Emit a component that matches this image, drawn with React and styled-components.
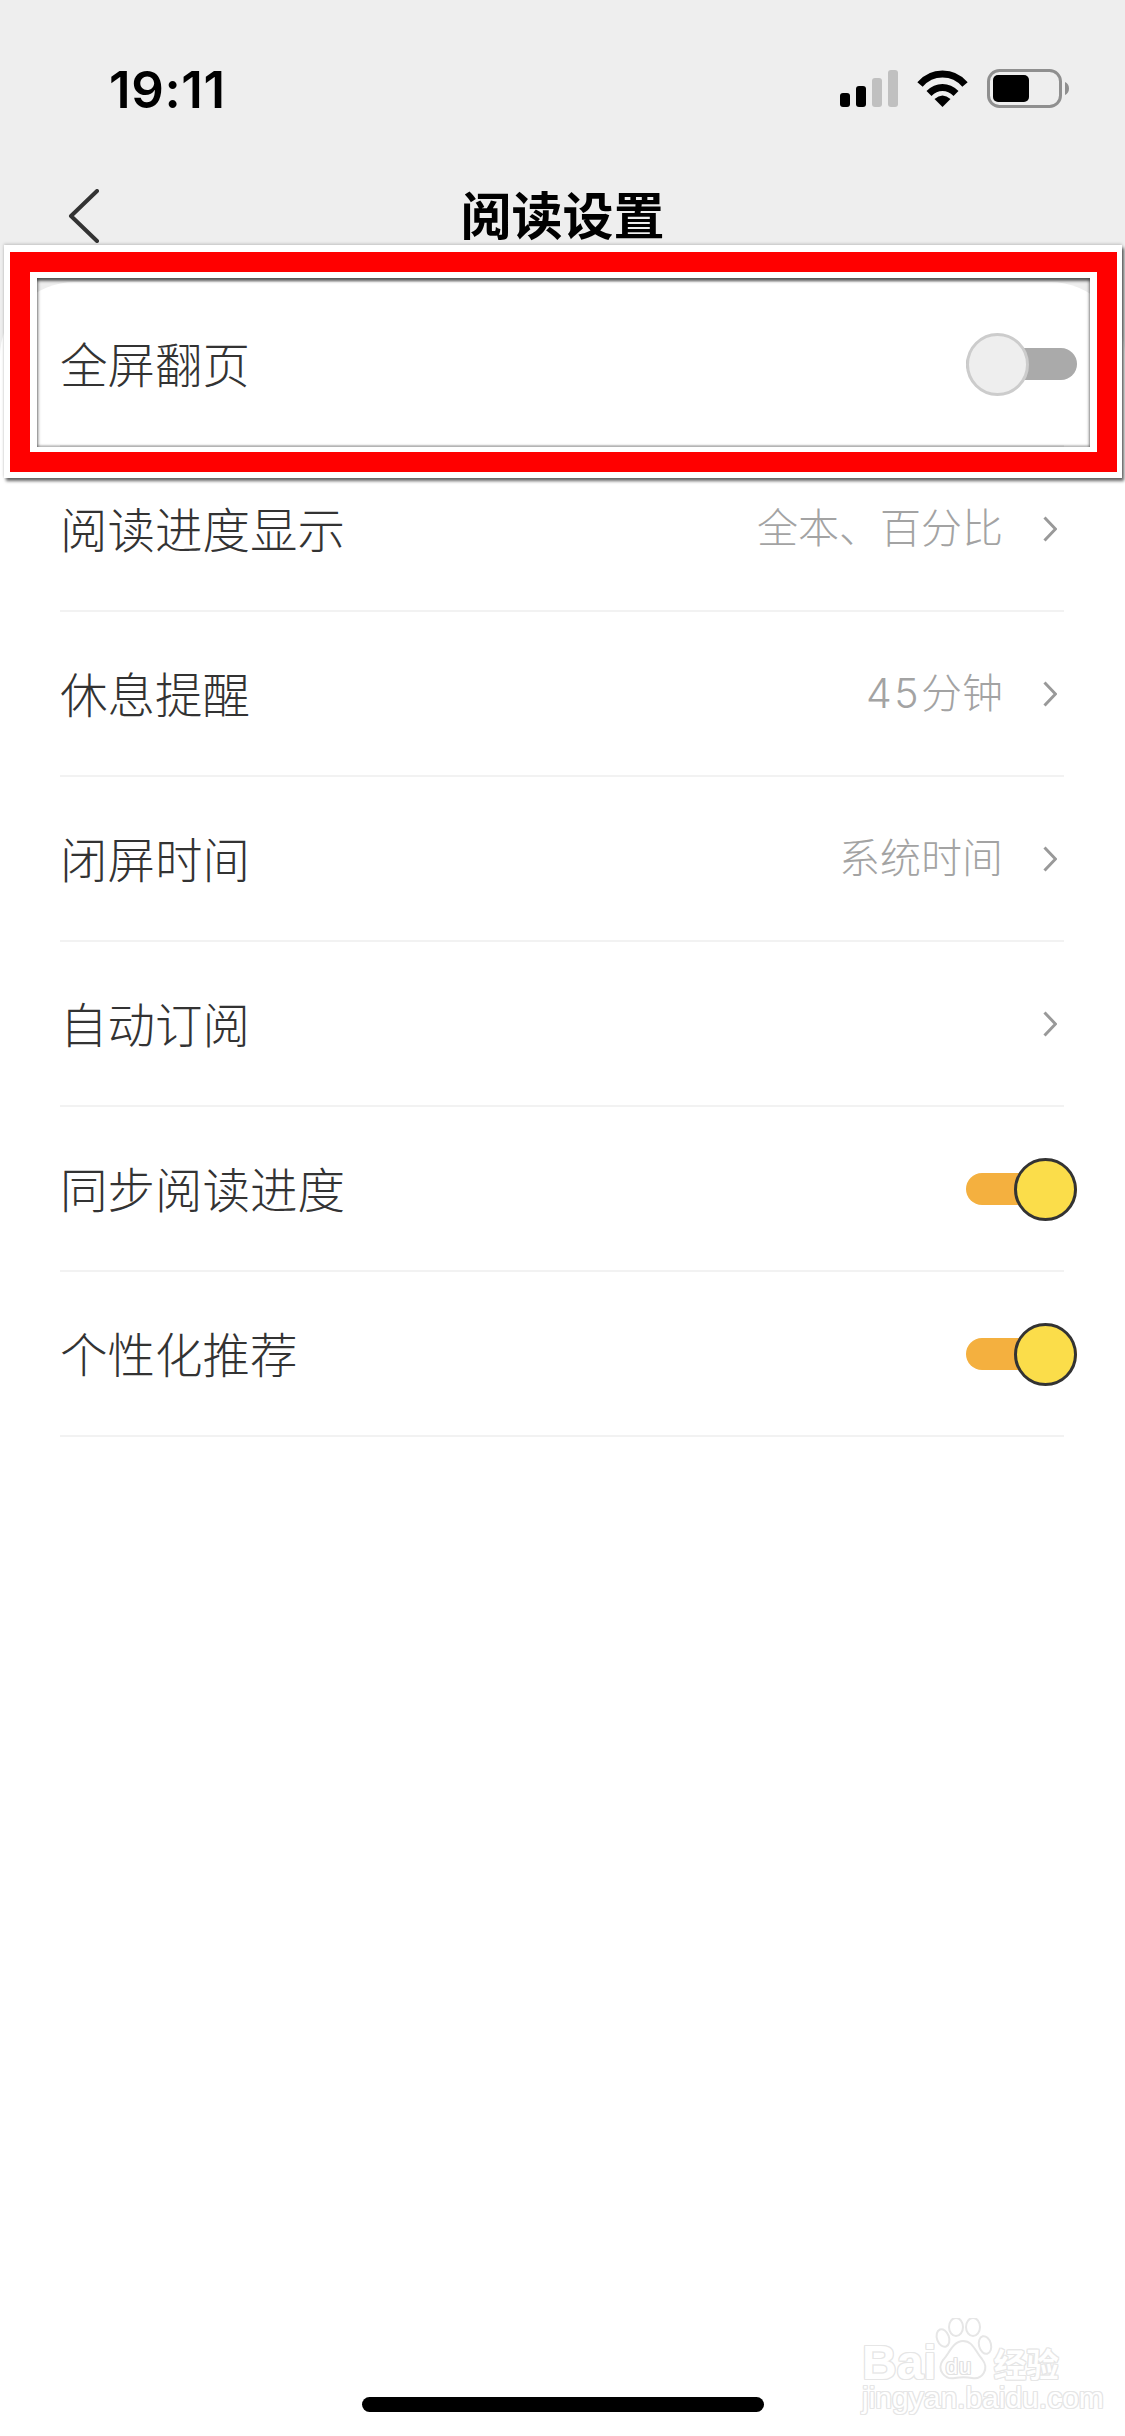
import React from "react";
import styled, { createGlobalStyle } from "styled-components";

const Global = createGlobalStyle`
  html, body { margin: 0; padding: 0; background: #fff; }
  * { box-sizing: border-box; }
`;

const CJK = `"Noto Sans CJK SC", "Noto Sans", sans-serif`;

const outline = (c) => `
  text-shadow:
    1px 0 0 ${c}, -1px 0 0 ${c}, 0 1px 0 ${c}, 0 -1px 0 ${c},
    1px 1px 0 ${c}, -1px 1px 0 ${c}, 1px -1px 0 ${c}, -1px -1px 0 ${c};
`;

const Page = styled.div`
  position: relative;
  width: 1125px;
  height: 2436px;
  overflow: hidden;
  display: flex;
  flex-direction: column;
  background: #eeeeee;
  font-family: ${CJK};
`;

const StatusBar = styled.div`
  height: 176px;
  flex: none;
  display: flex;
  align-items: center;
  justify-content: space-between;
  padding: 1px 56px 0 109px;
`;

const Time = styled.span`
  font-family: Inter, "Liberation Sans", sans-serif;
  font-size: 51px;
  font-weight: 600;
  line-height: 1;
  letter-spacing: 0.6px;
  padding-top: 2px;
  color: #000;
`;

const StatusIcons = styled.div`
  display: flex;
  align-items: center;
  gap: 19px;
`;

const NavBar = styled.div`
  height: 80px;
  flex: none;
  margin-bottom: 26px;
  display: grid;
  grid-template-columns: 1fr auto 1fr;
  align-items: center;
`;

const BackIcon = styled.svg`
  display: block;
  margin-left: 68px;
`;

const Title = styled.h1`
  margin: 0;
  padding-bottom: 6px;
  font-size: 51px;
  font-weight: 700;
  line-height: 1;
  color: #000;
`;

const Sheet = styled.main`
  flex: 1;
  display: flex;
  flex-direction: column;
  align-items: center;
  justify-content: space-between;
  padding-bottom: 24px;
  background: #fff;
  border-radius: 75px 75px 0 0;
`;

const List = styled.div`
  align-self: stretch;
  display: flex;
  flex-direction: column;
  padding: 0 61px 0 60px;
`;

const Row = styled.div`
  height: 165px;
  display: flex;
  align-items: center;
  justify-content: space-between;
  border-bottom: 2px solid #f2f2f2;
`;

const Label = styled.span`
  padding-bottom: 2px;
  font-size: 47.5px;
  font-weight: 300;
  line-height: 1;
  color: #333;
`;

const Detail = styled.div`
  display: flex;
  align-items: center;
  gap: 40px;
  padding-right: 7px;
`;

const Value = styled.span`
  font-family: Inter, ${CJK};
  font-size: 41px;
  font-weight: 300;
  line-height: 1;
  color: #a3a3a3;
`;

const Digits = styled.span`
  letter-spacing: 2.5px;
`;

const Track = styled.div`
  position: relative;
  width: 111px;
  height: 32px;
  margin-right: -13px;
  border-radius: 16px;
  background: ${(p) => (p.$on ? "#f4b03f" : "#aaaaaa")};
`;

const Knob = styled.div`
  position: absolute;
  top: -15px;
  ${(p) => (p.$on ? "right: 0;" : "left: 0;")}
  width: 63px;
  height: 63px;
  border-radius: 50%;
  border: 3px solid ${(p) => (p.$on ? "#333333" : "#cccccc")};
  background: ${(p) => (p.$on ? "#fbdd4a" : "#eeeeee")};
`;

const HomeBar = styled.div`
  width: 402px;
  height: 15px;
  border-radius: 8px;
  background: #000;
`;

const Highlight = styled.div`
  position: absolute;
  left: 4px;
  top: 245px;
  width: 1118px;
  height: 233px;
  pointer-events: none;
  border-style: solid;
  border-color: #fff;
  border-width: 7px 5px 6px 6px;
  box-shadow: 2px 3px 3px rgba(0, 0, 0, 0.6), 0 -1px 3px rgba(0, 0, 0, 0.2);
`;

const RedBand = styled.div`
  height: 100%;
  border: 20px solid #ff0000;
`;

const WhiteBand = styled.div`
  height: 100%;
  border-style: solid;
  border-color: #fff;
  border-width: 6px 7px 5px 7px;
`;

const Window = styled.div`
  height: 100%;
  box-shadow:
    inset 0 3px 3px rgba(0, 0, 0, 0.6),
    inset 2px 0 3px rgba(0, 0, 0, 0.18),
    inset -2px 0 3px rgba(0, 0, 0, 0.12),
    inset 0 -2px 2px rgba(0, 0, 0, 0.18);
`;

const Watermark = styled.div`
  position: absolute;
  left: 862px;
  top: 2318px;
  width: 206px;
  display: flex;
  flex-direction: column;
  color: #fff;
`;

const MarkTop = styled.div`
  display: flex;
  align-items: flex-end;
  height: 64px;
`;

const Bai = styled.span`
  font-family: "Liberation Sans", sans-serif;
  font-size: 48px;
  font-weight: 700;
  line-height: 0.8;
  ${outline("#e6e6e6")}
`;

const PawBox = styled.div`
  position: relative;
  width: 56px;
  height: 64px;
  margin: 0 3px 0 -2px;
  flex: none;
`;

const Du = styled.span`
  position: absolute;
  left: 11px;
  bottom: 4px;
  font-family: "Liberation Sans", sans-serif;
  font-size: 22px;
  line-height: 1;
  letter-spacing: 1px;
  color: #fff;
  ${outline("#e2e2e2")}
`;

const Jing = styled.span`
  margin-bottom: 6px;
  font-size: 32.5px;
  font-weight: 700;
  line-height: 0.8;
  ${outline("#e6e6e6")}
`;

const Site = styled.span`
  margin-top: 1px;
  font-family: "Liberation Sans", sans-serif;
  font-size: 30px;
  line-height: 1;
  white-space: nowrap;
  ${outline("#e6e6e6")}
`;

const Signal = () => (
  <svg width="58" height="37" viewBox="0 0 58 37">
    <rect x="0" y="23" width="10" height="14" rx="3" fill="#000" />
    <rect x="16" y="16" width="10" height="21" rx="3" fill="#000" />
    <rect x="32" y="8" width="10" height="29" rx="3" fill="#c0c0c0" />
    <rect x="48" y="0" width="10" height="37" rx="3" fill="#c0c0c0" />
  </svg>
);

const Wifi = () => (
  <svg width="51" height="37" viewBox="0 0 51 37">
    <path d="M3 14.5C15 .5 36 .5 48 14.5" fill="none" stroke="#000" strokeWidth="7" />
    <path d="M12 23.5C20 15.5 31 15.5 39 23.5" fill="none" stroke="#000" strokeWidth="7" />
    <path d="M25.5 37L17.5 29Q25.5 22 33.5 29Z" fill="#000" />
  </svg>
);

const Battery = () => (
  <svg width="82" height="39" viewBox="0 0 82 39">
    <rect x="1.5" y="1.5" width="72" height="36" rx="11" fill="none" stroke="#8f8f8f" strokeWidth="3" />
    <rect x="6" y="6" width="36" height="27" rx="5" fill="#000" />
    <path d="M78 13C80.500 14 82 16.500 82 19.500C82 22.500 80.500 25 78 26Z" fill="#8f8f8f" />
  </svg>
);

const Back = () => (
  <BackIcon width="32" height="54" viewBox="0 0 32 54">
    <path d="M29 2L3 27L29 52" fill="none" stroke="#333" strokeWidth="4" strokeLinecap="round" strokeLinejoin="round" />
  </BackIcon>
);

const Chevron = () => (
  <svg width="14" height="26" viewBox="0 0 14 26">
    <path d="M1.500 1.500L12.500 13L1.500 24.500" fill="none" stroke="#999" strokeWidth="3" />
  </svg>
);

const Toggle = ({ on }) => (
  <Track $on={on}>
    <Knob $on={on} />
  </Track>
);

const Paw = () => (
  <svg width="58" height="64" viewBox="0 0 58 64" style={{ display: "block" }}>
    <g fill="#fff" stroke="#e6e6e6" strokeWidth="2">
      <ellipse cx="8" cy="20" rx="6" ry="9" transform="rotate(-20 8 20)" />
      <ellipse cx="21" cy="9" rx="7" ry="9" />
      <ellipse cx="38" cy="9" rx="7" ry="9" />
      <ellipse cx="50" cy="27" rx="6" ry="9" transform="rotate(-15 50 27)" />
      <path d="M28 23C38 23 40 33 47 41C55 51 47 62 37 60C31 59 26 59 20 60C10 62 1 52 8 42C14 36 18 23 28 23Z" />
    </g>
  </svg>
);

const rows = [
  { label: "全屏翻页", toggle: false },
  { label: "阅读进度显示", value: "全本、百分比" },
  { label: "休息提醒", value: <><Digits>45</Digits>分钟</> },
  { label: "闭屏时间", value: "系统时间" },
  { label: "自动订阅", value: "" },
  { label: "同步阅读进度", toggle: true },
  { label: "个性化推荐", toggle: true },
];

export default function App() {
  return (
    <Page>
      <Global />
      <StatusBar>
        <Time>19:11</Time>
        <StatusIcons>
          <Signal />
          <Wifi />
          <Battery />
        </StatusIcons>
      </StatusBar>
      <NavBar>
        <Back />
        <Title>阅读设置</Title>
      </NavBar>
      <Sheet>
        <List>
          {rows.map((r) => (
            <Row key={r.label}>
              <Label>{r.label}</Label>
              {r.toggle !== undefined ? (
                <Toggle on={r.toggle} />
              ) : (
                <Detail>
                  {r.value && <Value>{r.value}</Value>}
                  <Chevron />
                </Detail>
              )}
            </Row>
          ))}
        </List>
        <HomeBar />
      </Sheet>
      <Highlight>
        <RedBand>
          <WhiteBand>
            <Window />
          </WhiteBand>
        </RedBand>
      </Highlight>
      <Watermark>
        <MarkTop>
          <Bai>Bai</Bai>
          <PawBox>
            <Paw />
            <Du>du</Du>
          </PawBox>
          <Jing>经验</Jing>
        </MarkTop>
        <Site>jingyan.baidu.com</Site>
      </Watermark>
    </Page>
  );
}
